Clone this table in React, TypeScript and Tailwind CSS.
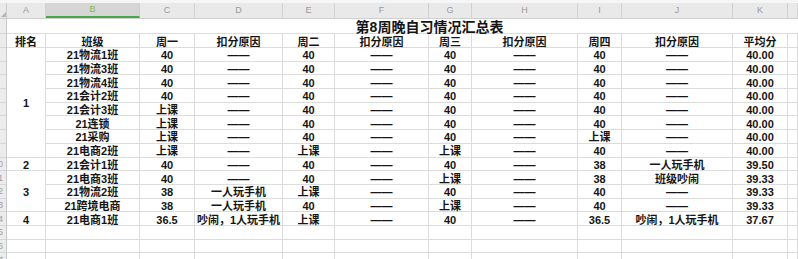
import React from 'react';

const D = '——';

const cols = [
  { l: 'A', w: 'w-[39px]' },
  { l: 'B', w: 'w-[94px]' },
  { l: 'C', w: 'w-[55px]' },
  { l: 'D', w: 'w-[88px]' },
  { l: 'E', w: 'w-[52px]' },
  { l: 'F', w: 'w-[94px]' },
  { l: 'G', w: 'w-[43px]' },
  { l: 'H', w: 'w-[106px]' },
  { l: 'I', w: 'w-[44px]' },
  { l: 'J', w: 'w-[111px]' },
  { l: 'K', w: 'w-[55px]' },
  { l: '', w: 'flex-1' },
];

const headers = ['排名', '班级', '周一', '扣分原因', '周二', '扣分原因', '周三', '扣分原因', '周四', '扣分原因', '平均分', ''];

const rows: string[][] = [
  ['21物流1班', '40', D, '40', D, '40', D, '40', D, '40.00'],
  ['21物流3班', '40', D, '40', D, '40', D, '40', D, '40.00'],
  ['21物流4班', '40', D, '40', D, '40', D, '40', D, '40.00'],
  ['21会计2班', '40', D, '40', D, '40', D, '40', D, '40.00'],
  ['21会计3班', '上课', D, '40', D, '40', D, '40', D, '40.00'],
  ['21连锁', '上课', D, '40', D, '40', D, '40', D, '40.00'],
  ['21采购', '上课', D, '40', D, '40', D, '上课', D, '40.00'],
  ['21电商2班', '上课', D, '上课', D, '上课', D, '40', D, '40.00'],
  ['21会计1班', '40', D, '40', D, '40', D, '38', '一人玩手机', '39.50'],
  ['21电商3班', '40', D, '40', D, '上课', D, '38', '班级吵闹', '39.33'],
  ['21物流2班', '38', '一人玩手机', '上课', D, '40', D, '40', D, '39.33'],
  ['21跨境电商', '38', '一人玩手机', '40', D, '上课', D, '40', D, '39.33'],
  ['21电商1班', '36.5', '吵闹，1人玩手机', '上课', D, '40', D, '36.5', '吵闹，1人玩手机', '37.67'],
  ['', '', '', '', '', '', '', '', '', ''],
  ['', '', '', '', '', '', '', '', '', ''],
  ['', '', '', '', '', '', '', '', '', ''],
];

const rankBlocks = [
  { t: '1', h: 'h-[109.6px]' },
  { t: '2', h: 'h-[13.7px]' },
  { t: '3', h: 'h-[41.1px]' },
  { t: '4', h: 'h-[13.7px]' },
  { t: '', h: 'h-[13.7px]' },
  { t: '', h: 'h-[13.7px]' },
  { t: '', h: 'h-[13.7px]' },
];

const rowNums = ['', '', '', '', '', '', '', '', '', '', '0', '1', '2', '3', '4', '5', '6', '7', '8'];

export default function App() {
  const rest = cols.slice(1);
  return (
    <div className="w-[798px] h-[259px] overflow-hidden bg-white font-[family-name:Liberation_Sans,Noto_Sans_CJK_SC,sans-serif] text-[#151515]">
      {/* column header band */}
      <div className="h-[19px] bg-[#f6f6f6] pt-[3px]">
        <div className="flex h-[16px] bg-[#e9e9e9] border-b border-[#cfcfcf]">
          <div className="w-[7px] shrink-0 border-r border-[#cfcfcf] flex items-end justify-start pb-[1px] pl-[1px]">
            <svg width="5" height="5" viewBox="0 0 5 5">
              <polygon points="5,0 5,5 0,5" fill="#b3b3b3" />
            </svg>
          </div>
          {cols.map((c, i) =>
            c.l === 'B' ? (
              <div key={i} className={`${c.w} shrink-0 flex items-center justify-center bg-[#d6d6d6] border-r border-[#cfcfcf] border-b-2 border-b-[#4aa548] text-[9px] text-[#86b85a] leading-none`}>
                {c.l}
              </div>
            ) : (
              <div key={i} className={`${c.w} ${c.l ? 'shrink-0' : ''} flex items-center justify-center border-r border-[#d2d2d2] text-[9px] text-[#9a9a9a] leading-none`}>
                {c.l}
              </div>
            )
          )}
        </div>
      </div>

      <div className="flex">
        {/* row header column */}
        <div className="w-[7px] shrink-0 flex flex-col bg-[#ececec] border-r border-[#c9c9c9]">
          {rowNums.map((n, i) => (
            <div
              key={i}
              className={`${i === 0 ? 'h-[15px]' : i === 1 ? 'h-[14px]' : 'h-[13.7px]'} overflow-hidden flex items-center justify-end pr-[3px] pt-[1px] border-b border-[#d6d6d6] text-[9px] leading-none text-[#a0a0a0] whitespace-nowrap`}
            >
              {n ? `1${n}` : ''}
            </div>
          ))}
        </div>

        {/* sheet */}
        <div className="flex-1 flex flex-col">
          {/* title row */}
          <div className="h-[15px] flex items-center justify-center pl-[54px] pt-[2px] border-b border-[#dcdcdc] text-[14px] font-bold leading-none">
            第8周晚自习情况汇总表
          </div>
          {/* header row */}
          <div className="h-[14px] flex">
            {cols.map((c, i) => (
              <div key={i} className={`${c.w} ${c.l ? 'shrink-0' : ''} flex items-center justify-center pt-[3px] border-r border-b border-[#dcdcdc] text-[11px] font-bold leading-none whitespace-nowrap`}>
                {headers[i]}
              </div>
            ))}
          </div>
          {/* data */}
          <div className="flex">
            <div className="w-[39px] shrink-0 flex flex-col">
              {rankBlocks.map((b, i) => (
                <div key={i} className={`${b.h} flex items-center justify-center pt-[3px] border-r border-b border-[#dcdcdc] text-[11px] font-bold leading-none`}>
                  {b.t}
                </div>
              ))}
            </div>
            <div className="flex-1 flex flex-col">
              {rows.map((r, ri) => (
                <div key={ri} className="h-[13.7px] flex">
                  {rest.map((c, ci) => (
                    <div key={ci} className={`${c.w} ${c.l ? 'shrink-0' : ''} flex items-center justify-center pt-[3px] border-r border-b border-[#dcdcdc] text-[11px] font-bold leading-none whitespace-nowrap`}>
                      {r[ci] ?? ''}
                    </div>
                  ))}
                </div>
              ))}
            </div>
          </div>
        </div>
      </div>
    </div>
  );
}
